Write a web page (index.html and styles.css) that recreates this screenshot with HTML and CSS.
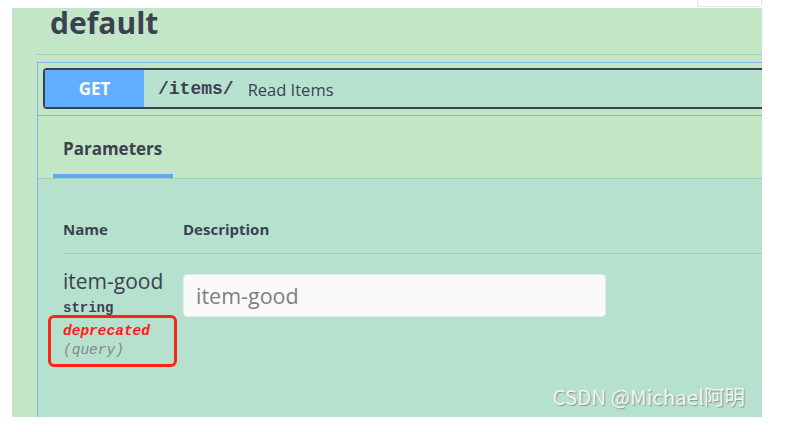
FILE: index.html
```html
<!DOCTYPE html>
<html lang="en">
<head>
<meta charset="utf-8">
<title>default</title>
<link rel="stylesheet" href="styles.css">
</head>
<body>
<div class="topbar"><div class="tab-stub"></div></div>
<section class="panel">
  <div class="tag"><h2>default</h2></div>
  <div class="opblock">
    <div class="summary-wrap">
      <div class="summary">
        <span class="method">GET</span>
        <span class="path">/items/</span>
        <span class="desc">Read Items</span>
      </div>
    </div>
    <div class="tabs"><div class="tab">Parameters</div></div>
    <div class="params">
      <div class="thead">
        <div class="col-name">Name</div>
        <div class="col-desc">Description</div>
      </div>
      <div class="row">
        <div class="col-name cell-name">
          <div class="pname">item-good</div>
          <div class="ptype">string</div>
          <div class="pdep">deprecated</div>
          <div class="pin">(query)</div>
          <span class="highlight"></span>
        </div>
        <div class="col-desc cell-desc">
          <input class="pinput" type="text" placeholder="item-good">
        </div>
      </div>
    </div>
  </div>
  <div class="watermark">CSDN @Michael阿明</div>
</section>
</body>
</html>
```

FILE: styles.css
```css
html, body {
  margin: 0;
  padding: 0;
  background: #ffffff;
}
body {
  font-family: "Open Sans", "Noto Sans CJK SC", sans-serif;
  color: #3b4151;
  width: 786px;
  height: 432px;
  overflow: hidden;
}
.topbar {
  height: 8px;
  display: flex;
  justify-content: flex-end;
  padding-right: 24px;
}
.tab-stub {
  width: 65px;
  height: 7px;
  box-sizing: border-box;
  border: 1px solid #e4e4e4;
  border-top: none;
  border-radius: 0 0 3px 3px;
}
.panel {
  margin-left: 12px;
  width: 750px;
  height: 409px;
  background: #c2e6c6;
  position: relative;
  display: flex;
  flex-direction: column;
}
.tag {
  margin-left: 25px;
  height: 46px;
  border-bottom: 1px solid #a7cfa8;
  flex-shrink: 0;
}
.tag h2 {
  margin: 0;
  padding-left: 13px;
  font-size: 30px;
  line-height: 30px;
  font-weight: 700;
  color: #3b4151;
}
.opblock {
  margin: 7px 0 0 25px;
  flex: 1;
  display: flex;
  flex-direction: column;
  border-top: 1px solid #7db8e6;
  border-left: 1px solid #7db8e6;
}
.summary-wrap {
  padding: 5px 0 6px 5px;
  border-bottom: 1px solid #7db8e6;
}
.summary {
  display: flex;
  align-items: center;
  height: 41px;
  box-sizing: border-box;
  border: 2px solid #3b4151;
  border-right: none;
  border-radius: 4px 0 0 4px;
  background: #b8e2d0;
}
.method {
  width: 99px;
  align-self: stretch;
  background: #61affe;
  color: #ffffff;
  font-weight: 700;
  font-size: 17px;
  display: flex;
  align-items: center;
  justify-content: center;
}
.path {
  font-family: "Liberation Mono", monospace;
  font-weight: 700;
  font-size: 18px;
  margin-left: 14px;
  color: #3b4151;
}
.desc {
  font-size: 16.5px;
  margin-left: 14px;
  margin-top: 1px;
  color: #3b4151;
}
.tabs {
  height: 63px;
  box-sizing: border-box;
  border-bottom: 1px solid #a5cfb9;
  display: flex;
  padding-left: 15px;
  background: #c2e6c6;
}
.tab {
  width: 120px;
  box-sizing: border-box;
  padding: 6px 0 0 10px;
  display: flex;
  align-items: center;
  border-bottom: 4px solid #5ea8f5;
  font-weight: 700;
  font-size: 17px;
}
.params {
  flex: 1;
  background: #b7e1cf;
  padding-left: 25px;
}
.thead {
  display: flex;
  align-items: flex-end;
  height: 75px;
  box-sizing: border-box;
  padding-bottom: 14px;
  border-bottom: 1px solid #9fcab6;
  font-weight: 700;
  font-size: 15px;
  line-height: 20px;
}
.col-name {
  width: 120px;
  flex-shrink: 0;
}
.row {
  display: flex;
}
.cell-name {
  position: relative;
  padding-top: 14px;
}
.pname {
  font-size: 21px;
  line-height: 26px;
}
.ptype {
  font-family: "Liberation Mono", monospace;
  font-weight: 700;
  font-size: 14px;
  line-height: 20px;
  margin-top: 4px;
}
.pdep {
  font-family: "Liberation Mono", monospace;
  font-weight: 700;
  font-style: italic;
  font-size: 14.5px;
  line-height: 20px;
  margin-top: 3px;
  color: #ff1a1a;
}
.pin {
  font-family: "Liberation Mono", monospace;
  font-style: italic;
  font-size: 14.5px;
  line-height: 18px;
  color: #7d8a86;
}
.highlight {
  position: absolute;
  left: -15px;
  top: 61px;
  width: 129px;
  height: 52px;
  box-sizing: border-box;
  border: 3px solid #ff2418;
  border-radius: 6px;
}
.cell-desc {
  padding-top: 20px;
}
.pinput {
  display: block;
  width: 423px;
  height: 43px;
  box-sizing: border-box;
  border: 1px solid #e2ebe7;
  border-radius: 4px;
  background: #fafafa;
  font-family: "Open Sans", sans-serif;
  font-size: 21.5px;
  color: #3b4151;
  padding: 0 12px;
  margin: 0;
}
.pinput::placeholder {
  color: #7f7f7f;
  opacity: 1;
}
.watermark {
  position: absolute;
  right: 17px;
  bottom: 9px;
  font-family: "Noto Sans CJK SC", sans-serif;
  font-size: 20.5px;
  line-height: 24px;
  color: #f4f4f4;
  text-shadow: 1px 1px 1px rgba(60, 60, 60, 0.45);
}
```
